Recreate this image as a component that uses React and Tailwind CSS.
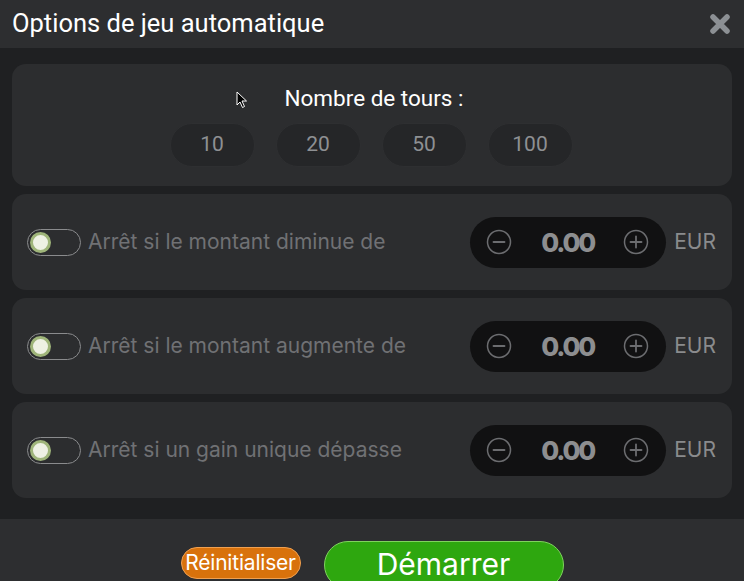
import React from "react";

function Toggle() {
  return (
    <div className="w-[54px] h-[27px] rounded-full border border-[#8a8b8d] flex items-center pl-[2px] shrink-0">
      <div className="w-[21px] h-[21px] rounded-full bg-[#eef1e4] border-[3px] border-[#9fb57a]" />
    </div>
  );
}

function CircleIcon({ plus }) {
  return (
    <svg width="26" height="26" viewBox="0 0 26 26" fill="none">
      <circle cx="13" cy="13" r="11.5" stroke="#6c6d70" strokeWidth="1.5" />
      <line x1="7.5" y1="13" x2="18.5" y2="13" stroke="#6c6d70" strokeWidth="1.8" strokeLinecap="round" />
      {plus && <line x1="13" y1="7.5" x2="13" y2="18.5" stroke="#6c6d70" strokeWidth="1.8" strokeLinecap="round" />}
    </svg>
  );
}

function StopRow({ label }) {
  return (
    <div className="h-[96px] rounded-[14px] bg-[#2c2d2f] flex items-center pl-[15px] pr-[16px]">
      <Toggle />
      <span className="ml-[7px] text-[21px] text-[#707174] font-['Inter']">{label}</span>
      <div className="ml-auto w-[196px] h-[51px] rounded-full bg-[#111112] flex items-center justify-between pl-[16px] pr-[17px]">
        <CircleIcon />
        <span className="text-[26px] font-extrabold text-[#8d8e90] font-['Inter'] tracking-[-2.2px]">0.00</span>
        <CircleIcon plus />
      </div>
      <span className="ml-[8px] text-[21px] text-[#8a8b8d] font-['Inter']">EUR</span>
    </div>
  );
}

export default function App() {
  return (
    <div className="relative w-[744px] h-[581px] overflow-hidden bg-[#1f2022] font-['Roboto',sans-serif]">
      <div className="h-[48px] bg-[#2d2e30] flex items-center justify-between pl-[12px] pr-[13px]">
        <span className="text-[25.5px] text-white font-['Roboto'] leading-none">Options de jeu automatique</span>
        <svg width="22" height="22" viewBox="0 0 22 22">
          <path d="M4 4 L18 18 M18 4 L4 18" stroke="#8c9094" strokeWidth="5.5" strokeLinecap="round" />
        </svg>
      </div>
      <div className="px-[12px] pt-[16px] pb-[21px] flex flex-col gap-[8px]">
        <div className="h-[122px] rounded-[14px] bg-[#2c2d2f] flex flex-col items-center pt-[21px]">
          <span className="text-[22.5px] text-white font-['Roboto'] leading-[26px] pl-[4px]">Nombre de tours :</span>
          <div className="mt-[12px] flex gap-[21px] pr-[2px]">
            {["10", "20", "50", "100"].map((n) => (
              <div key={n} className="w-[85px] h-[44px] rounded-full bg-[#252628] border border-[#2e2f31] flex items-center justify-center text-[21px] text-[#8e9093] font-['Roboto']">
                {n}
              </div>
            ))}
          </div>
        </div>
        <StopRow label="Arrêt si le montant diminue de" />
        <StopRow label="Arrêt si le montant augmente de" />
        <StopRow label="Arrêt si un gain unique dépasse" />
      </div>
      <div className="h-[63px] bg-[#2d2e30] flex items-start justify-center gap-[23px] pt-[22px]">
        <button className="mt-[6px] w-[120px] h-[32px] rounded-full bg-[#d8720c] border border-[#f0a050] text-white text-[21px] font-['Inter'] tracking-[-0.2px] flex items-center justify-center whitespace-nowrap">
          Réinitialiser
        </button>
        <button className="w-[240px] h-[48px] rounded-full bg-[#2ea70f] border border-[#7fd25e] text-white text-[30px] font-['Inter'] flex items-center justify-center pb-[2px]">
          Démarrer
        </button>
      </div>
      <svg className="absolute left-[236px] top-[91px]" width="12" height="18" viewBox="0 0 12 18">
        <path d="M1 1 L1 14 L4 11 L6.5 16.5 L8.5 15.5 L6 10 L10.5 10 Z" fill="#000" stroke="#fff" strokeWidth="1" />
      </svg>
    </div>
  );
}
